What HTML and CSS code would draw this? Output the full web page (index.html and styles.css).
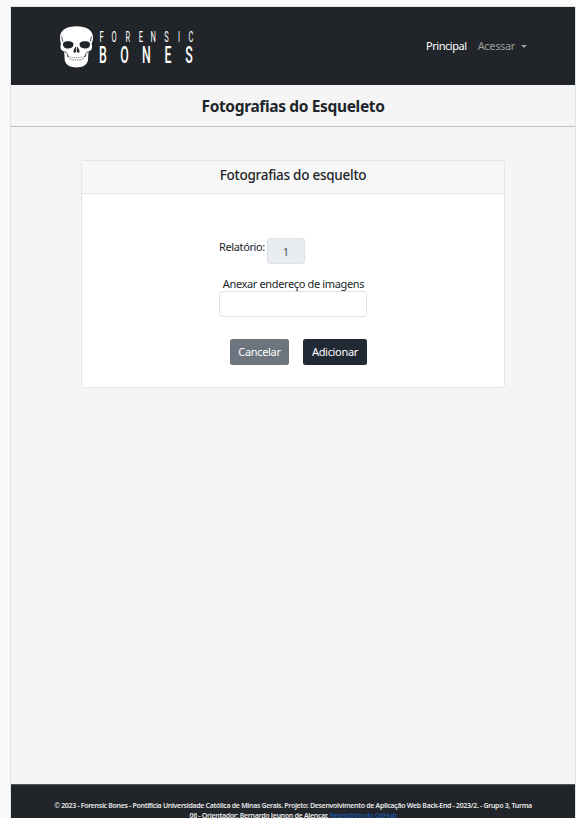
FILE: index.html
```html
<!DOCTYPE html>
<html lang="pt-BR">
<head>
<meta charset="utf-8">
<title>Forensic Bones</title>
<link rel="stylesheet" href="styles.css">
</head>
<body>
<div class="page">
  <header class="navbar">
    <svg class="logo" width="145" height="46" viewBox="0 0 145 46" role="img" aria-label="Forensic Bones">
      <g transform="translate(0 1)">
        <path fill="#fff" d="M17.500 2.300C8 2.300 1 6 1 13.500c0 3 .6 4.500 1 6.500-.8 2-.7 4.700.5 6l2.700 1.800.5 8c.3 3 2 5 5 6.500 3 1.500 10.500 1.500 13.500 0 3-1.500 4.500-3.500 4.800-6.500l.5-8 2.600-1.800c1.200-1.300 1.300-4 .5-6 .5-2 1.400-3.500 1.400-6.500C34 6 27 2.300 17.500 2.300z"/>
        <g fill="#212529">
          <path d="M4.500 18.500c2-1.600 7-1.700 9.500.3 1 1.200.4 4-1.500 5-2.600 1-6 .8-7.500-.6-1.200-1.200-1.300-3.500-.5-4.700zM30.500 18.500c-2-1.600-7-1.700-9.500.3-1 1.200-.4 4 1.500 5 2.600 1 6 .8 7.500-.6 1.200-1.200 1.300-3.500.5-4.700z"/>
          <path d="M17.100 22.300c-1.600 1.800-2.800 4-2.600 5.600.4 1.200 2 .9 2.600-.2zM17.900 22.300c1.600 1.800 2.800 4 2.600 5.600-.4 1.200-2 .9-2.600-.2z"/>
        </g>
        <g fill="none" stroke="#212529" stroke-width=".8">
          <path d="M2.600 12.500c.2 2 1 3 1.200 5M32.400 12.500c-.2 2-1 3-1.200 5M5.500 27.500c2 .6 3 2.500 3.500 5.500M29.500 27.500c-2 .6-3 2.500-3.500 5.500"/>
          <path d="M9 31.500c1 4.500 4 4.500 8.500 4.500s7.500 0 8.500-4.500" stroke-width=".6" stroke-dasharray="1.500 .7"/>
          <path d="M10.500 32.800c4 1.200 10 1.200 14 0" stroke-width=".6" stroke-dasharray="1.200 1"/>
        </g>
      </g>
      <g class="logo-text" transform="scale(.5 1)">
        <text class="logo-small" x="81 105 133 159.500 183 210.500 238 259" y="18.700">FORENSIC</text>
        <text class="logo-large" x="80 122.500 166 211 252.500" y="39.800">BONES</text>
      </g>
    </svg>
    <nav class="nav">
      <a class="nav-link active">Principal</a>
      <a class="nav-link toggle">Acessar</a>
    </nav>
  </header>
  <h1 class="title">Fotografias do Esqueleto</h1>
  <main class="content">
    <section class="card">
      <h2 class="card-header">Fotografias do esquelto</h2>
      <form class="form">
        <div class="report">
          <label class="report-label" for="report">Relatório:</label>
          <input class="input report-input" id="report" value="1" disabled>
        </div>
        <label class="images-label" for="images">Anexar endereço de imagens</label>
        <input class="input images-input" id="images">
        <div class="actions">
          <button class="btn cancel" type="button">Cancelar</button>
          <button class="btn add" type="button">Adicionar</button>
        </div>
      </form>
    </section>
  </main>
  <footer class="footer">
    <div class="line-one">© 2023 - Forensic Bones - Pontifícia Universidade Católica de Minas Gerais. Projeto: Desenvolvimento de Aplicação Web Back-End - 2023/2. - Grupo 3, Turma</div>
    <div class="line-two">06 - Orientador: Bernardo Jeunon de Alencar. <a class="repo">Repositório do GitHub</a></div>
  </footer>
</div>
</body>
</html>
```
FILE: styles.css
```css
* { box-sizing: border-box; }
html, body { height: 100%; }
body {
  margin: 0;
  padding: 6px 0 0 10px;
  overflow: hidden;
  background: #fafafa;
  color: #212529;
  font-family: "Noto Sans", "Open Sans", sans-serif;
  font-size: 11px;
}
.page {
  display: flex;
  flex-direction: column;
  width: 566px;
  height: 812px;
  overflow: hidden;
  border: 1px solid #dee2e6;
  border-bottom: 0;
  background: #f5f5f5;
}
.navbar {
  display: flex;
  align-items: center;
  justify-content: space-between;
  flex: none;
  height: 78px;
  padding: 0 48px;
  background: #212529;
}
.logo { display: block; }
.logo-text { fill: #fff; font-family: Roboto, sans-serif; }
.logo-small { font-size: 15px; }
.logo-large { font-size: 24.6px; font-weight: 500; }
.nav { display: flex; gap: 11px; line-height: 16px; }
.nav-link { color: #9b9d9f; letter-spacing: -.35px; white-space: nowrap; }
.nav-link.active { color: #fff; letter-spacing: -.45px; }
.toggle { display: flex; align-items: center; }
.toggle::after {
  content: "";
  margin-left: 6px;
  border: 3.500px solid transparent;
  border-top-color: currentColor;
  border-bottom: 0;
}
.title {
  flex: none;
  height: 42px;
  margin: 0;
  border-bottom: 1px solid #bfc0c1;
  font-size: 15.500px;
  font-weight: 700;
  line-height: 42px;
  text-align: center;
  letter-spacing: -.35px;
}
.content { flex: 1; padding: 33px 70px 0; }
.card {
  height: 228px;
  border: 1px solid #e4e5e6;
  border-radius: 3px;
  background: #fff;
}
.card-header {
  height: 33px;
  margin: 0;
  border-bottom: 1px solid #e4e5e6;
  background: #f7f7f7;
  font-size: 13.500px;
  font-weight: 500;
  line-height: 29px;
  text-align: center;
  letter-spacing: -.26px;
}
.form { display: flex; flex-direction: column; width: 148px; margin: 44px auto 0; }
.report { display: flex; gap: 2px; height: 26px; }
.report-label { width: 46px; line-height: 18px; white-space: nowrap; letter-spacing: -.38px; }
.input {
  height: 26px;
  padding: 0 8px;
  border: 1px solid #dee2e6;
  border-radius: 3px;
  background: #fff;
  color: #495057;
  font: inherit;
}
.report-input { width: 38px; background: #e9ecef; text-align: center; }
.images-label { margin-top: 12px; padding-left: 1px; line-height: 15px; text-align: center; white-space: nowrap; letter-spacing: -.36px; }
.images-input { width: 148px; }
.actions { display: flex; justify-content: flex-end; gap: 14px; margin-top: 22px; }
.btn {
  height: 26px;
  padding: 0 0 1px;
  border: 0;
  border-radius: 2.500px;
  color: #fff;
  font: inherit;
  letter-spacing: -.32px;
}
.cancel { width: 59px; background: #6c757d; }
.add { width: 64px; background: #212934; }
.footer {
  flex: none;
  height: 34px;
  padding-top: 16px;
  border-top: 1px solid #54575a;
  background: #212529;
  color: #e6e7e8;
  font-size: 7px;
  font-weight: 600;
  line-height: 10px;
  text-align: center;
  white-space: nowrap;
}
.line-one { letter-spacing: -.32px; }
.line-two { letter-spacing: -.3px; }
.repo { color: #1c5fc0; font-weight: 400; }
```
